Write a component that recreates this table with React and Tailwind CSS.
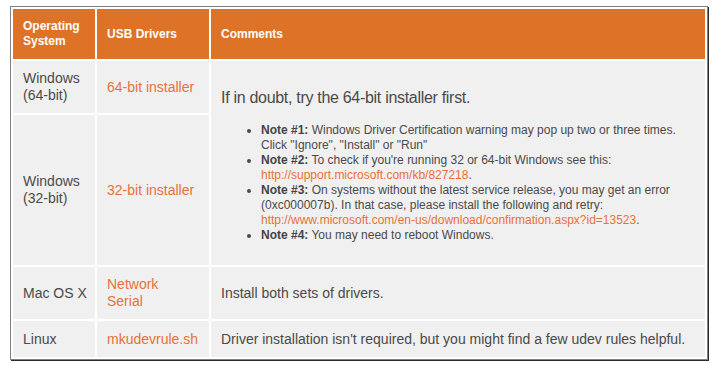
import React from "react";

const notes = [
  {
    label: "Note #1:",
    text: ' Windows Driver Certification warning may pop up two or three times. Click "Ignore", "Install" or "Run"',
  },
  {
    label: "Note #2:",
    text: " To check if you're running 32 or 64-bit Windows see this: ",
    link: "http://support.microsoft.com/kb/827218",
  },
  {
    label: "Note #3:",
    text: " On systems without the latest service release, you may get an error (0xc000007b). In that case, please install the following and retry: ",
    link: "http://www.microsoft.com/en-us/download/confirmation.aspx?id=13523",
  },
  {
    label: "Note #4:",
    text: " You may need to reboot Windows.",
  },
];

const Cell = ({ className = "", children }) => (
  <div className={`bg-[#f0f0f0] px-[10px] flex items-center whitespace-nowrap text-[14px] leading-[17px] text-[#4a4a4a] ${className}`}>
    {children}
  </div>
);

const Head = ({ children }) => (
  <div className="bg-[#de7226] px-[10px] flex items-center text-[12px] leading-[15px] font-bold text-white">
    {children}
  </div>
);

const A = ({ children }) => <a className="text-[#e8703a]">{children}</a>;

export default function App() {
  return (
    <div className="bg-white w-[720px] h-[366px] pt-[6px] pl-[10px] font-['Liberation_Sans',Arial,sans-serif]">
      <div className="w-[698px] border border-[#808080] shadow-[1px_1px_0_#2a2a2a] p-[2px]">
        <div className="grid grid-cols-[82px_112px_494px] grid-rows-[50px_52px_150px_52px_36px] gap-[2px]">
          <Head>
            Operating
            <br />
            System
          </Head>
          <Head>USB Drivers</Head>
          <Head>Comments</Head>

          <Cell>
            <span>
              Windows
              <br />
              (64-bit)
            </span>
          </Cell>
          <Cell>
            <A>64-bit installer</A>
          </Cell>
          <div className="row-span-2 bg-[#f0f0f0] pl-[10px] pr-[8px] pt-[28px] text-[#4a4a4a]">
            <p className="text-[16px] leading-[18px] tracking-[-0.3px]">If in doubt, try the 64-bit installer first.</p>
            <ul className="list-disc pl-[40px] mt-[16px] text-[12px] leading-[15px]">
              {notes.map((n) => (
                <li key={n.label}>
                  <b className="text-[#444]">{n.label}</b>
                  {n.text}
                  {n.link && (
                    <>
                      <A>{n.link}</A>.
                    </>
                  )}
                </li>
              ))}
            </ul>
          </div>

          <Cell>
            <span>
              Windows
              <br />
              (32-bit)
            </span>
          </Cell>
          <Cell>
            <A>32-bit installer</A>
          </Cell>

          <Cell>Mac OS X</Cell>
          <Cell>
            <span>
              <A>Network</A>
              <br />
              <A>Serial</A>
            </span>
          </Cell>
          <Cell>Install both sets of drivers.</Cell>

          <Cell>Linux</Cell>
          <Cell>
            <A>mkudevrule.sh</A>
          </Cell>
          <Cell>Driver installation isn't required, but you might find a few udev rules helpful.</Cell>
        </div>
      </div>
    </div>
  );
}
